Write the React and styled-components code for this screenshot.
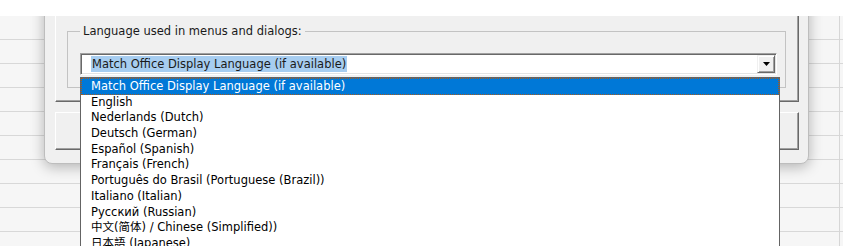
import React from "react";
import styled, { createGlobalStyle } from "styled-components";

const Global = createGlobalStyle`
  html, body { margin: 0; padding: 0; background: #ffffff; }
  #root { width: 843px; height: 246px; }
`;

const FONT = `"DejaVu Sans", "Noto Sans CJK SC", sans-serif`;

const Page = styled.div`
  width: 843px;
  height: 246px;
  overflow: hidden;
  display: flex;
  flex-direction: column;
  background: #ffffff;
  font-family: ${FONT};
  font-size: 11.5px;
  color: #000;
`;

const TopBand = styled.div`
  height: 16px;
  flex: none;
  background: #ffffff;
`;

const Sheet = styled.div`
  position: relative;
  flex: 1;
  overflow: hidden;
  background-color: #f6f6f6;
  background-image:
    linear-gradient(to right, transparent 839px, #d6d6d6 839px, #d6d6d6 840px, transparent 840px),
    repeating-linear-gradient(to bottom, transparent 0, transparent 23px, #d8d8d8 23px, #d8d8d8 24px);
`;

const Dialog = styled.div`
  position: absolute;
  left: 44px;
  top: -20px;
  width: 765px;
  box-sizing: border-box;
  display: flex;
  flex-direction: column;
  gap: 10px;
  padding: 0 9px 13px 10px;
  background: #f0f0f0;
  border: 1px solid #bdbdbd;
  border-radius: 8px;
  box-shadow: 0 3px 14px rgba(0, 0, 0, 0.28);
`;

const RaisedPanel = styled.div`
  box-sizing: border-box;
  height: ${(p) => (p.$h ? `${p.$h}px` : "auto")};
  padding: ${(p) => p.$pad || "0"};
  border-top: 1px solid #ffffff;
  border-left: 1px solid #ffffff;
  border-right: 1px solid #696969;
  border-bottom: 1px solid #696969;
  box-shadow: inset -1px -1px 0 #a0a0a0;
  background: #f0f0f0;
`;

const GroupBox = styled.fieldset`
  margin: 0;
  min-width: 0;
  padding: 14px 8px 12px 12px;
  border: 1px solid #c3c3c3;
  border-radius: 0;
`;

const Legend = styled.legend`
  padding: 0 3px;
  line-height: 15px;
  color: #1a1a1a;
`;

const Combo = styled.div`
  box-sizing: border-box;
  height: 22px;
  display: flex;
  align-items: stretch;
  background: #ffffff;
  border-top: 1px solid #a0a0a0;
  border-left: 1px solid #a0a0a0;
  border-right: 1px solid #ffffff;
  border-bottom: 1px solid #ffffff;
  box-shadow: inset 1px 1px 0 #696969, inset -1px -1px 0 #e3e3e3;
  padding: 1px 1px 1px 10px;
`;

const ComboText = styled.div`
  flex: 1;
  display: flex;
  align-items: center;
`;

const Selected = styled.span`
  background: #a7cdf0;
  color: #1a1a1a;
  line-height: 16px;
  padding: 0 1px;
`;

const ArrowButton = styled.div`
  width: 18px;
  height: 18px;
  align-self: flex-start;
  box-sizing: border-box;
  display: flex;
  align-items: center;
  justify-content: center;
  background: #f0f0f0;
  border-top: 1px solid #f0f0f0;
  border-left: 1px solid #f0f0f0;
  border-right: 1px solid #696969;
  border-bottom: 1px solid #696969;
  box-shadow: inset 1px 1px 0 #ffffff, inset -1px -1px 0 #a0a0a0;
`;

const List = styled.div`
  position: absolute;
  left: 80px;
  top: 61px;
  width: 700px;
  height: 200px;
  box-sizing: border-box;
  background: #ffffff;
  border: 1px solid #646464;
`;

const Item = styled.div`
  box-sizing: border-box;
  height: ${(p) => (p.$active ? 16.7 : 15.7)}px;
  line-height: ${(p) => (p.$active ? 15 : 15)}px;
  padding-left: ${(p) => (p.$active ? 9 : 10)}px;
  white-space: nowrap;
  color: ${(p) => (p.$active ? "#ffffff" : "#000000")};
  background: ${(p) => (p.$active ? "#0078d7" : "transparent")};
  border: ${(p) => (p.$active ? "1px dotted #a65a1c" : "none")};
`;

const languages = [
  "Match Office Display Language (if available)",
  "English",
  "Nederlands (Dutch)",
  "Deutsch (German)",
  "Español (Spanish)",
  "Français (French)",
  "Português do Brasil (Portuguese (Brazil))",
  "Italiano (Italian)",
  "Русский (Russian)",
  "中文(简体) / Chinese (Simplified))",
  "日本語 (Japanese)",
];

export default function App() {
  return (
    <>
      <Global />
      <Page>
        <TopBand />
        <Sheet>
          <Dialog>
            <RaisedPanel $pad="26px 12px 13px 11px">
              <GroupBox>
                <Legend>Language used in menus and dialogs:</Legend>
                <Combo>
                  <ComboText>
                    <Selected>Match Office Display Language (if available)</Selected>
                  </ComboText>
                  <ArrowButton>
                    <svg width="7" height="4" viewBox="0 0 7 4">
                      <path d="M0 0H7L3.5 4Z" fill="#000" />
                    </svg>
                  </ArrowButton>
                </Combo>
              </GroupBox>
            </RaisedPanel>
            <RaisedPanel $h={38} />
          </Dialog>
          <List>
            {languages.map((l, i) => (
              <Item key={l} $active={i === 0}>
                {l}
              </Item>
            ))}
          </List>
        </Sheet>
      </Page>
    </>
  );
}
